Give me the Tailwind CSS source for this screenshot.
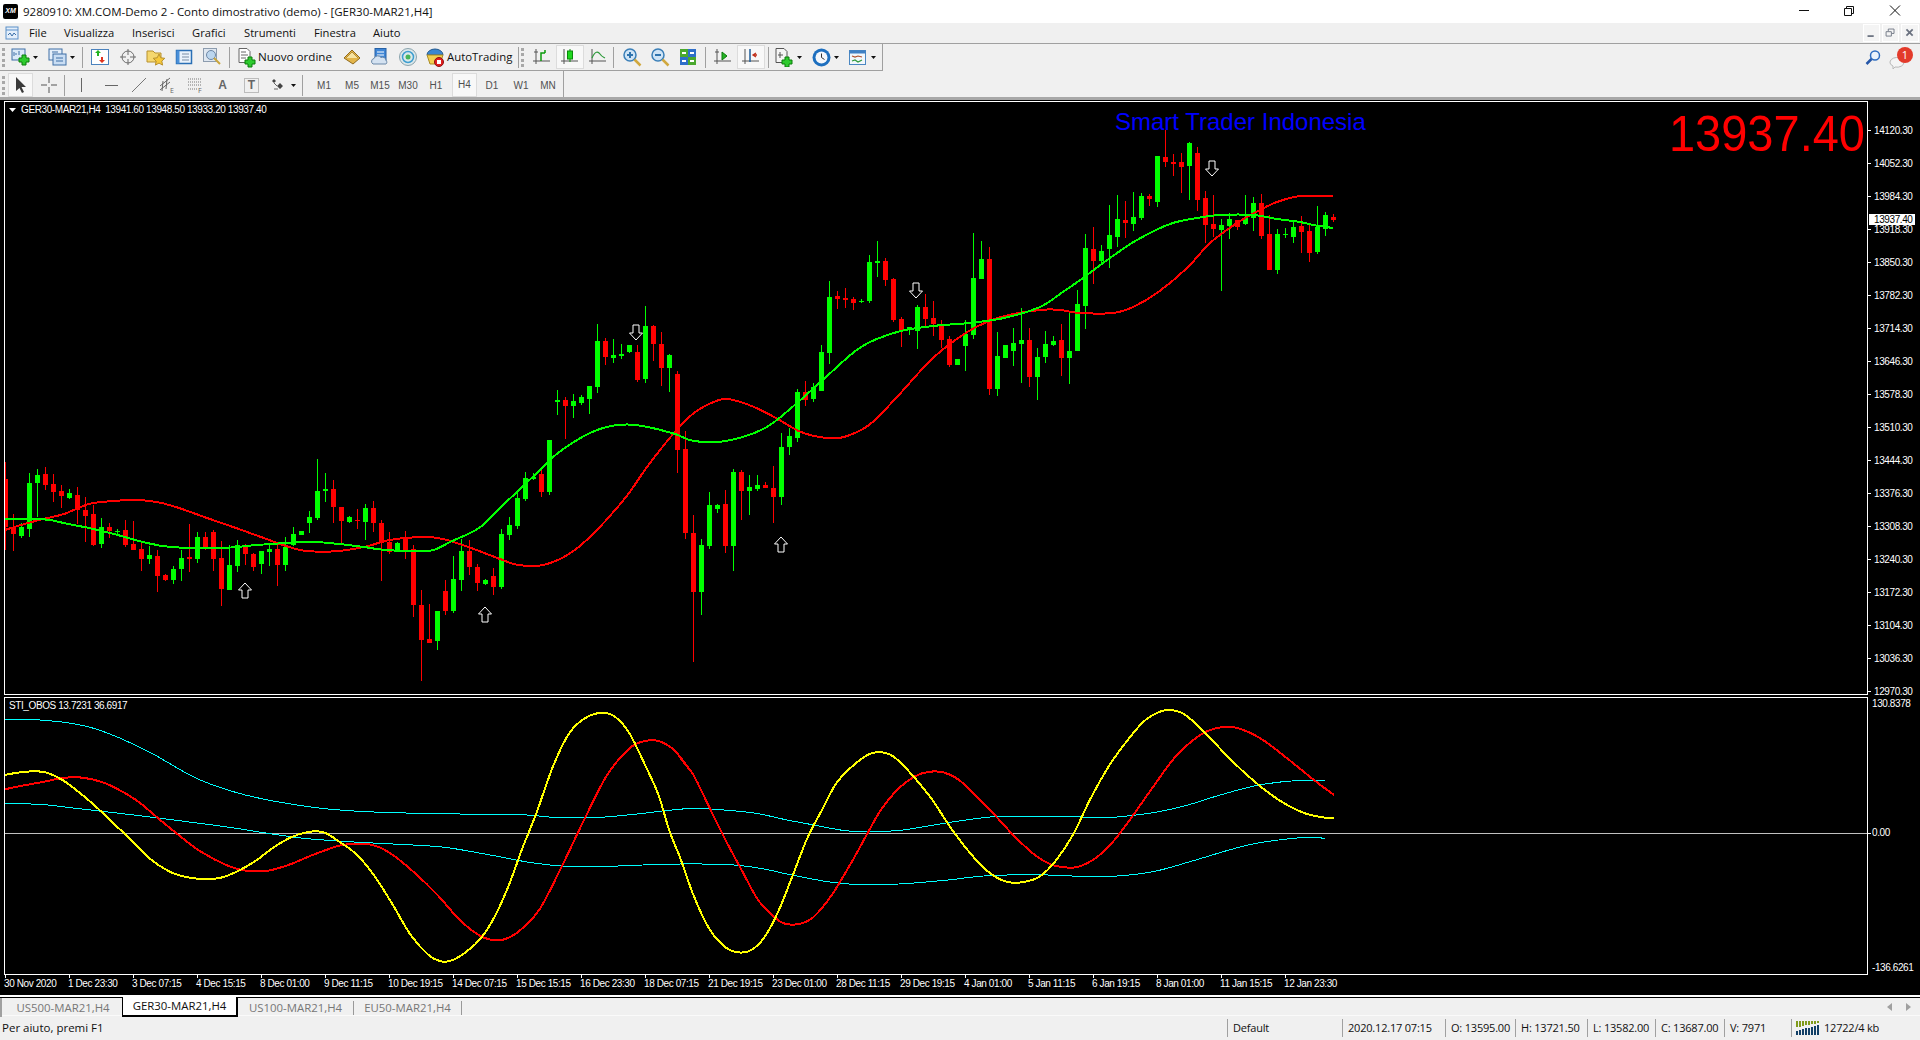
<!DOCTYPE html>
<html lang="en" class="overflow-hidden">
<head>
  <meta charset="UTF-8" />
  <title>9280910: XM.COM-Demo 2</title>
  <script src="https://cdn.jsdelivr.net/npm/@tailwindcss/browser@4"></script>
</head>
<body class="w-[1920px] h-[1040px] overflow-hidden bg-[#f0f0f0]">
<div class="w-[1920px] h-[1040px] overflow-hidden flex flex-col text-[12px] text-[#111] font-['Open_Sans',sans-serif]">

  <!-- title bar -->
  <div class="h-[23px] bg-white flex items-center relative">
    <span class="ml-[3px] w-[15px] h-[15px] bg-black rounded-[2px] flex items-center justify-center text-[7px] italic font-bold text-white font-['Liberation_Sans',sans-serif]">XM</span>
    <span class="ml-[5px] text-[11.5px] leading-none">9280910: XM.COM-Demo 2 - Conto dimostrativo (demo) - [GER30-MAR21,H4]</span>
    <div class="ml-auto flex items-center">
      <svg class="w-[46px] h-[23px]" viewBox="0 0 46 23"><path d="M15 10.5h10" stroke="#111" fill="none"/></svg>
      <svg class="w-[46px] h-[23px]" viewBox="0 0 46 23"><path d="M14.500 8.500h7v7h-7zM16.500 8.500v-2h7v7h-2" stroke="#111" fill="none"/></svg>
      <svg class="w-[44px] h-[23px]" viewBox="0 0 44 23"><path d="M14 5.500l10 10M24 5.500l-10 10" stroke="#111" fill="none"/></svg>
    </div>
  </div>

  <!-- menu bar -->
  <div class="h-[21px] border-b border-[#a0a0a0] flex items-center relative text-[11.2px]">
    <svg class="absolute left-[5px] top-[3px] w-[14px] h-[14px]" viewBox="0 0 14 14"><rect x="1" y="1" width="12" height="12" fill="#e3eefa" stroke="#5b8fc8"/><path d="M1 4h12" stroke="#5b8fc8"/><path d="M3 9l2-2 2 3 2-3 2 2" stroke="#3a6ea8" fill="none"/></svg>
    <span class="absolute left-[29px]">File</span>
    <span class="absolute left-[64px]">Visualizza</span>
    <span class="absolute left-[132px]">Inserisci</span>
    <span class="absolute left-[192px]">Grafici</span>
    <span class="absolute left-[244px]">Strumenti</span>
    <span class="absolute left-[314px]">Finestra</span>
    <span class="absolute left-[373px]">Aiuto</span>
    <div class="ml-auto flex gap-[2px] pr-[1px]">
      <svg class="w-[17px] h-[18px] bg-[#f4f4f4] border border-white" viewBox="0 0 17 18"><path d="M4 12.500h7" stroke="#6b7280" stroke-width="2"/></svg>
      <svg class="w-[17px] h-[18px] bg-[#f4f4f4] border border-white" viewBox="0 0 17 18"><path d="M3.500 7.500h6v5h-6zM6 7V4.500h6.500v5H10" stroke="#6b7280" fill="none"/></svg>
      <svg class="w-[18px] h-[18px] bg-[#f4f4f4] border border-white" viewBox="0 0 18 18"><path d="M5 5l7 7M12 5l-7 7" stroke="#6b7280" stroke-width="2"/></svg>
    </div>
  </div>

  <!-- standard toolbar -->
  <div class="h-[27px] relative">
    <div class="h-[27px] w-[883px] border-b border-r border-[#a0a0a0] flex items-center">
      <span class="ml-[2px] mr-[5px] w-[3px] h-[19px] border-l-[3px] border-dotted border-[#a8a8a8]"></span>
      <span class="w-[21px] flex justify-center">
        <svg class="w-[20px] h-[20px]" viewBox="0 0 20 20"><rect x="1" y="2" width="13" height="11" fill="#dbe9f8" stroke="#3f6fa5"/><path d="M3 5v4M5 6v2M8 4v4" stroke="#3f6fa5"/><path d="M11 8h4v3h3v4h-3v3h-4v-3H8v-4h3z" fill="#2ecb2e" stroke="#0b7d0b"/></svg>
      </span>
      <span class="w-[9px] flex justify-center"><svg class="w-[5px] h-[3px]" viewBox="0 0 5 3"><path d="M0 0h5L2.500 3z" fill="#111"/></svg></span>
      <span class="ml-[7px] w-[21px] flex justify-center">
        <svg class="w-[20px] h-[20px]" viewBox="0 0 20 20"><rect x="1" y="2" width="13" height="11" fill="#e4eefa" stroke="#3f6fa5"/><rect x="5" y="7" width="13" height="11" fill="#c9ddf3" stroke="#3f6fa5"/><path d="M4 5h6M8 11h7M8 14h7" stroke="#3f6fa5"/></svg>
      </span>
      <span class="w-[9px] flex justify-center"><svg class="w-[5px] h-[3px]" viewBox="0 0 5 3"><path d="M0 0h5L2.500 3z" fill="#111"/></svg></span>
      <span class="ml-[5px] mr-[3px] w-px h-[21px] bg-[#a0a0a0]"></span>
      <span class="w-[28px] flex justify-center">
        <svg class="w-[20px] h-[20px]" viewBox="0 0 20 20"><rect x="1.500" y="2.500" width="17" height="15" fill="#fff" stroke="#4b82bd"/><path d="M7 9V6H5l3-3 3 3H9v3z" fill="#22b322"/><path d="M11 10v3h-2l3 3 3-3h-2v-3z" fill="#e0341f"/></svg>
      </span>
      <span class="w-[28px] flex justify-center">
        <svg class="w-[20px] h-[20px]" viewBox="0 0 20 20"><circle cx="10" cy="10" r="6" fill="none" stroke="#6b6b6b"/><path d="M10 2v6M10 12v6M2 10h6M12 10h6" stroke="#6b6b6b"/></svg>
      </span>
      <span class="w-[28px] flex justify-center">
        <svg class="w-[20px] h-[20px]" viewBox="0 0 20 20"><path d="M1 4h6l2 2h6v9H1z" fill="#f5d76e" stroke="#b8912e"/><path d="M13 7l1.800 3.800 4 .5-3 2.800.8 4-3.600-2-3.600 2 .8-4-3-2.800 4-.5z" fill="#f6c83a" stroke="#b8912e"/></svg>
      </span>
      <span class="w-[28px] flex justify-center">
        <svg class="w-[18px] h-[18px]" viewBox="0 0 18 18"><rect x="1.500" y="2.500" width="15" height="13" fill="#eaf3fc" stroke="#2a6fb5" stroke-width="1.500"/><path d="M1.500 2.500h3v13h-3z" fill="#4a90d9"/><path d="M7 6h7M7 9h7M7 12h7" stroke="#7a8ea5"/></svg>
      </span>
      <span class="w-[28px] flex justify-center">
        <svg class="w-[20px] h-[20px]" viewBox="0 0 20 20"><rect x="1.500" y="1.500" width="13" height="13" fill="#dfe7f0" stroke="#8d9cae"/><circle cx="9" cy="8" r="4.500" fill="#bcd6ee" stroke="#6d87a5"/><path d="M12 11l6 6" stroke="#c9a53c" stroke-width="2"/></svg>
      </span>
      <span class="ml-[3px] mr-[2px] w-px h-[21px] bg-[#a0a0a0]"></span>
      <span class="ml-[5px] w-[20px] flex justify-center">
        <svg class="w-[20px] h-[21px]" viewBox="0 0 20 21"><path d="M2 1.500h8l3 3v11H2z" fill="#fff" stroke="#666"/><path d="M4 5h5M4 8h7M4 11h5" stroke="#666"/><path d="M11 10h4v3h3v4h-3v3h-4v-3H8v-4h3z" fill="#2ecb2e" stroke="#0b7d0b"/></svg>
      </span>
      <span class="ml-[1px] w-[77px] whitespace-nowrap text-[11.6px]">Nuovo ordine</span>
      <span class="ml-[3px] w-[28px] flex justify-center">
        <svg class="w-[20px] h-[20px]" viewBox="0 0 20 20"><path d="M2 11l8-8 8 8-7 6z" fill="#e3b54a" stroke="#8f6a1e"/><path d="M4 11l6-6 6 6" fill="#f6e3a1" stroke="#b68d35"/></svg>
      </span>
      <span class="w-[28px] flex justify-center">
        <svg class="w-[20px] h-[20px]" viewBox="0 0 20 20"><rect x="5" y="1.500" width="11" height="12" fill="#3f86d6" stroke="#2761a5"/><path d="M7 5h7M7 8h7" stroke="#fff"/><path d="M3 17a3 3 0 0 1 1-5.500 4 4 0 0 1 7-1 3.500 3.500 0 0 1 5 3 2.200 2.200 0 0 1 0 3.500z" fill="#d4e2f1" stroke="#6a88a8"/></svg>
      </span>
      <span class="w-[27px] flex justify-center">
        <svg class="w-[20px] h-[20px]" viewBox="0 0 20 20"><circle cx="10" cy="10" r="8.500" fill="#dce8ea" stroke="#8aa3ad"/><circle cx="10" cy="10" r="5.500" fill="none" stroke="#3e9ed0" stroke-width="1.500"/><circle cx="10" cy="10" r="2.500" fill="#46b558"/></svg>
      </span>
      <span class="ml-[2px] w-[24px] flex justify-center">
        <svg class="w-[20px] h-[21px]" viewBox="0 0 20 21"><path d="M2 8a8 6 0 0 1 16 0z" fill="#3b87cf" stroke="#23598f"/><path d="M2 8h16l-3 9H5z" fill="#f3d04f" stroke="#a88c27"/><circle cx="14" cy="15" r="4.500" fill="#e01f1f" stroke="#8e1010"/><rect x="12" y="13" width="4" height="4" fill="#fff"/></svg>
      </span>
      <span class="w-[66px] whitespace-nowrap text-[11.4px]">AutoTrading</span>
      <span class="ml-[5px] w-px h-[21px] bg-[#a0a0a0]"></span>
      <span class="ml-[2px] w-[3px] h-[19px] border-l-[3px] border-dotted border-[#a8a8a8]"></span>
      <span class="ml-[4px] w-[28px] h-[24px] flex justify-center items-center">
        <svg class="w-[18px] h-[18px]" viewBox="0 0 18 18"><path d="M3 1v15M0 13h17M1 4h4" stroke="#555" fill="none"/><path d="M8 13V5h4M12 5V2" stroke="#0a9a0a" stroke-width="1.500" fill="none"/></svg>
      </span>
      <span class="w-[28px] h-[24px] flex justify-center items-center bg-[#f8f8f8] border border-[#dcdcdc]">
        <svg class="w-[18px] h-[18px]" viewBox="0 0 18 18"><path d="M3 1v15M0 13h17" stroke="#555" fill="none"/><path d="M9 1v13" stroke="#0a8a0a"/><rect x="6.500" y="3" width="5" height="8" fill="#1fd81f" stroke="#0a8a0a"/></svg>
      </span>
      <span class="w-[28px] h-[24px] flex justify-center items-center">
        <svg class="w-[18px] h-[18px]" viewBox="0 0 18 18"><path d="M3 1v15M0 13h17" stroke="#555" fill="none"/><path d="M3 10c3-7 6-7 8-4s3 3 5 4" stroke="#2d9a3a" fill="none" stroke-width="1.200"/></svg>
      </span>
      <span class="ml-[1px] mr-[4px] w-px h-[21px] bg-[#a0a0a0]"></span>
      <span class="w-[28px] flex justify-center">
        <svg class="w-[20px] h-[20px]" viewBox="0 0 20 20"><circle cx="8" cy="8" r="6" fill="#cfe4f6" stroke="#3a7fb8" stroke-width="1.500"/><path d="M5 8h6M8 5v6" stroke="#2f74ae" stroke-width="2"/><path d="M12.500 12.500l6 6" stroke="#d0a83f" stroke-width="2.500"/></svg>
      </span>
      <span class="w-[28px] flex justify-center">
        <svg class="w-[20px] h-[20px]" viewBox="0 0 20 20"><circle cx="8" cy="8" r="6" fill="#cfe4f6" stroke="#3a7fb8" stroke-width="1.500"/><path d="M5 8h6" stroke="#2f74ae" stroke-width="2"/><path d="M12.500 12.500l6 6" stroke="#d0a83f" stroke-width="2.500"/></svg>
      </span>
      <span class="w-[28px] flex justify-center">
        <svg class="w-[18px] h-[18px]" viewBox="0 0 18 18"><rect x="1" y="1" width="8" height="8" fill="#4aa82e"/><rect x="9" y="1" width="8" height="8" fill="#2f6fc9"/><rect x="1" y="9" width="8" height="8" fill="#2f6fc9"/><rect x="9" y="9" width="8" height="8" fill="#4aa82e"/><path d="M3 5h4M11 5h4M3 13h4M11 13h4" stroke="#fff" stroke-width="2"/></svg>
      </span>
      <span class="ml-[3px] mr-[3px] w-px h-[21px] bg-[#a0a0a0]"></span>
      <span class="w-[28px] h-[24px] flex justify-center items-center">
        <svg class="w-[18px] h-[18px]" viewBox="0 0 18 18"><path d="M3 1v15M0 13h17M1 4h4" stroke="#555" fill="none"/><path d="M8 4l5 4-5 4z" fill="#24b324" stroke="#0a7a0a"/></svg>
      </span>
      <span class="w-[28px] h-[24px] flex justify-center items-center bg-[#f8f8f8] border border-[#dcdcdc]">
        <svg class="w-[18px] h-[18px]" viewBox="0 0 18 18"><path d="M3 1v15M0 13h17" stroke="#555" fill="none"/><path d="M8 1v13" stroke="#1d5c9a" stroke-width="1.500"/><path d="M15 7h-3M14 5l-3 2 3 2" stroke="#c0301c" fill="none" stroke-width="1.300"/></svg>
      </span>
      <span class="ml-[3px] mr-[5px] w-px h-[21px] bg-[#a0a0a0]"></span>
      <span class="w-[20px] flex justify-center">
        <svg class="w-[20px] h-[20px]" viewBox="0 0 20 20"><path d="M2 1.500h8l3 3v11H2z" fill="#f5f5f5" stroke="#555"/><path d="M6 5v6M4 8h5" stroke="#555"/><path d="M11 10h4v3h3v4h-3v3h-4v-3H8v-4h3z" fill="#2ecb2e" stroke="#0b7d0b"/></svg>
      </span>
      <span class="w-[10px] flex justify-center"><svg class="w-[5px] h-[3px]" viewBox="0 0 5 3"><path d="M0 0h5L2.500 3z" fill="#111"/></svg></span>
      <span class="ml-[7px] w-[20px] flex justify-center">
        <svg class="w-[19px] h-[19px]" viewBox="0 0 19 19"><circle cx="9.500" cy="9.500" r="9" fill="#1d6fbf"/><circle cx="9.500" cy="9.500" r="6" fill="#f4f7fb"/><path d="M9.500 5.500v4l3 2" stroke="#333" fill="none"/></svg>
      </span>
      <span class="w-[10px] flex justify-center"><svg class="w-[5px] h-[3px]" viewBox="0 0 5 3"><path d="M0 0h5L2.500 3z" fill="#111"/></svg></span>
      <span class="ml-[7px] w-[20px] flex justify-center">
        <svg class="w-[18px] h-[18px]" viewBox="0 0 18 18"><rect x=".5" y="2.500" width="16" height="14" fill="#f2f7fc" stroke="#4a87c2"/><rect x=".5" y="2.500" width="16" height="3" fill="#3f80c4"/><path d="M3 8l3 1 3-1 4 1" stroke-width="1.200" fill="none" stroke="#b0502a"/><path d="M3 13l3-1 3 2 4-2" stroke-width="1.200" fill="none" stroke="#2f9a3a"/></svg>
      </span>
      <span class="w-[10px] flex justify-center"><svg class="w-[5px] h-[3px]" viewBox="0 0 5 3"><path d="M0 0h5L2.500 3z" fill="#111"/></svg></span>
    </div>
    <!-- search + notification at the far right -->
    <svg class="absolute left-[1864px] top-[5px] w-[18px] h-[18px]" viewBox="0 0 18 18"><circle cx="11" cy="6.500" r="4.500" fill="#eaf2fb" stroke="#2d6cc0" stroke-width="1.500"/><path d="M7.500 10l-5 5" stroke="#2456a8" stroke-width="2.500"/></svg>
    <svg class="absolute left-[1889px] top-[2px] w-[26px] h-[24px]" viewBox="0 0 26 24"><path d="M1 17a7 5 0 0 1 14-1 7 5 0 0 1-9 5l-2 2v-3a5 5 0 0 1-3-3z" fill="#f4f4f4" stroke="#b8b8b8"/><circle cx="16" cy="9" r="8" fill="#e33a2a"/></svg>
    <span class="absolute left-[1901px] top-[3px] w-[8px] text-center text-[11px] leading-[16px] text-white">1</span>
  </div>

  <!-- line studies + timeframes -->
  <div class="h-[26px]">
    <div class="h-[26px] w-[564px] pt-[2px] border-r border-[#a0a0a0] flex items-center">
      <span class="ml-[2px] mr-[3px] w-[3px] h-[19px] border-l-[3px] border-dotted border-[#a8a8a8]"></span>
      <span class="w-[25px] h-[24px] flex justify-center items-center bg-[#f8f8f8] border border-[#dcdcdc]">
        <svg class="w-[12px] h-[16px]" viewBox="0 0 12 16"><path d="M1 0v14l3.500-3 2.500 5 2-1-2.500-5H11z" fill="#3a3a3a"/></svg>
      </span>
      <span class="w-[31px] flex justify-center">
        <svg class="w-[16px] h-[16px]" viewBox="0 0 16 16"><path d="M8 0v6M8 10v6M0 8h6M10 8h6" stroke="#555"/></svg>
      </span>
      <span class="w-px h-[21px] bg-[#a0a0a0]"></span>
      <span class="w-[33px] flex justify-center"><svg class="w-[3px] h-[14px]" viewBox="0 0 3 14"><path d="M1.500 0v14" stroke="#666"/></svg></span>
      <span class="w-[26px] flex justify-center"><svg class="w-[13px] h-[3px]" viewBox="0 0 13 3"><path d="M0 1.500h13" stroke="#666"/></svg></span>
      <span class="w-[29px] flex justify-center"><svg class="w-[14px] h-[14px]" viewBox="0 0 14 14"><path d="M0 14L14 0" stroke="#777"/></svg></span>
      <span class="w-[27px] flex justify-center">
        <svg class="w-[18px] h-[18px]" viewBox="0 0 18 18"><path d="M2 10l10-8M2 14l10-8M4 15l1-10M8 13l1-10" stroke="#666" fill="none"/><text x="12" y="17" font-size="7" fill="#666">E</text></svg>
      </span>
      <span class="w-[29px] flex justify-center">
        <svg class="w-[18px] h-[18px]" viewBox="0 0 18 18"><path d="M2 3h13M2 6h13M2 9h13M2 13h10" stroke="#777" stroke-dasharray="1 1"/><text x="12" y="17" font-size="7" fill="#666">F</text></svg>
      </span>
      <span class="w-[27px] text-center text-[12px] font-bold text-[#666] font-['Liberation_Sans',sans-serif]">A</span>
      <span class="w-[31px] flex justify-center relative">
        <svg class="w-[15px] h-[15px]" viewBox="0 0 15 15"><rect x=".5" y=".5" width="14" height="14" fill="none" stroke="#888" stroke-dasharray="1 1"/></svg>
        <span class="absolute inset-0 text-center text-[12px] leading-[15px] font-bold text-[#666] font-['Liberation_Sans',sans-serif]">T</span>
      </span>
      <span class="w-[22px] flex justify-center">
        <svg class="w-[14px] h-[14px]" viewBox="0 0 14 14"><path d="M1 3l2-2 2 2-2 2zM6 8l3-3 3 3-3 3z" fill="#444"/><path d="M3 5l3 3M3 11h4" stroke="#666"/></svg>
      </span>
      <span class="w-[8px] flex justify-center"><svg class="w-[5px] h-[3px]" viewBox="0 0 5 3"><path d="M0 0h5L2.500 3z" fill="#111"/></svg></span>
      <span class="ml-[5px] w-px h-[21px] bg-[#a0a0a0]"></span>
      <div class="ml-[7px] flex items-center text-[10px] text-[#505050] font-['Liberation_Sans',sans-serif]">
        <span class="w-[28px] text-center">M1</span>
        <span class="w-[28px] text-center">M5</span>
        <span class="w-[28px] text-center">M15</span>
        <span class="w-[28px] text-center">M30</span>
        <span class="w-[28px] text-center">H1</span>
        <span class="ml-[2px] w-[25px] h-[24px] leading-[22px] text-center bg-[#f8f8f8] border border-[#dcdcdc]">H4</span>
        <span class="w-[30px] text-center">D1</span>
        <span class="w-[28px] text-center">W1</span>
        <span class="w-[26px] text-center">MN</span>
      </div>
    </div>
  </div>

  <!-- chart window -->
  <div class="h-[898px] bg-black border-t-[3px] border-[#a8a8a8] pt-px flex flex-col font-['Liberation_Sans',sans-serif] text-white text-[10px] tracking-[-0.4px]">
    <!-- price pane -->
    <div class="h-[593px] flex">
      <div class="ml-[4px] w-[1864px] border border-b-0 border-white h-full relative overflow-hidden">
        <svg id="price-plot" class="w-full h-[592px] block" viewBox="5 102 1862 592"></svg>
        <div class="absolute left-[4px] top-[2px] leading-[12px] flex items-center whitespace-pre">
          <svg class="w-[7px] h-[4px] mr-[5px]" viewBox="0 0 7 4"><path d="M0 0h7L3.500 4z" fill="#fff"/></svg>GER30-MAR21,H4&nbsp;&nbsp;13941.60 13948.50 13933.20 13937.40</div>
        <div class="absolute left-[1110px] top-[6px] text-[24px] leading-[28px] tracking-normal text-[#0000ff]">Smart Trader Indonesia</div>
        <div class="absolute right-[2px] top-[6px] text-[47px] leading-[52px] tracking-normal text-[#ff0000] scale-y-[1.08]">13937.40</div>
      </div>
      <div id="price-axis" class="flex-1 relative"></div>
    </div>
    <div class="h-[3px] border-t border-white ml-[4px] w-[1864px]"></div>
    <!-- indicator pane -->
    <div class="h-[278px] flex">
      <div class="ml-[4px] w-[1864px] border border-white h-full relative overflow-hidden">
        <svg id="osc-plot" class="w-full h-full block" viewBox="5 698 1862 276"></svg>
        <div class="absolute left-[4px] top-[2px] leading-[12px]">STI_OBOS 13.7231 36.6917</div>
      </div>
      <div id="osc-axis" class="flex-1 relative"></div>
    </div>
    <!-- time axis -->
    <div id="time-axis" class="h-[20px] relative"></div>
  </div>

  <!-- chart tabs -->
  <div class="h-[20px] border-t-2 border-white relative">
    <div class="h-[20px] border-t border-black flex items-center text-[11.4px] relative">
      <span class="w-[2px] h-[19px] bg-[#a0a0a0]"></span>
      <span class="w-[122px] -mr-[2px] text-center text-[#777]">US500-MAR21,H4</span>
      <span class="w-[116px] h-[20px] -mt-px bg-white border-x border-b-2 border-black border-r-2 text-center leading-[18px]">GER30-MAR21,H4</span>
      <span class="w-[116px] text-center text-[#777] border-r border-[#999] leading-[14px]">US100-MAR21,H4</span>
      <span class="w-[108px] text-center text-[#777] border-r border-[#999] leading-[14px]">EU50-MAR21,H4</span>
      <svg class="absolute left-[1887px] top-[5px] w-[5px] h-[8px]" viewBox="0 0 5 8"><path d="M5 0v8L0 4z" fill="#a0a0a0"/></svg>
      <svg class="absolute left-[1906px] top-[5px] w-[5px] h-[8px]" viewBox="0 0 5 8"><path d="M0 0v8l5-4z" fill="#a0a0a0"/></svg>
    </div>
  </div>

  <!-- status bar -->
  <div class="flex-1 border-t border-[#fafafa] flex items-center text-[11px] tracking-[-0.2px] whitespace-nowrap">
    <span class="w-[1227px] pl-[2px] text-[11.5px] tracking-normal">Per aiuto, premi F1</span>
    <span class="w-[115px] pl-[5px] h-[18px] leading-[18px] border-l border-[#a0a0a0]">Default</span>
    <span class="w-[103px] pl-[5px] h-[18px] leading-[18px] border-l border-[#a0a0a0]">2020.12.17 07:15</span>
    <span class="w-[70px] pl-[5px] h-[18px] leading-[18px] border-l border-[#a0a0a0]">O: 13595.00</span>
    <span class="w-[72px] pl-[5px] h-[18px] leading-[18px] border-l border-[#a0a0a0]">H: 13721.50</span>
    <span class="w-[68px] pl-[5px] h-[18px] leading-[18px] border-l border-[#a0a0a0]">L: 13582.00</span>
    <span class="w-[69px] pl-[5px] h-[18px] leading-[18px] border-l border-[#a0a0a0]">C: 13687.00</span>
    <span class="w-[67px] pl-[5px] h-[18px] leading-[18px] border-l border-[#a0a0a0]">V: 7971</span>
    <span class="flex-1 pl-[4px] h-[18px] leading-[18px] border-l border-[#a0a0a0] flex items-center gap-[4px]">
      <svg class="w-[24px] h-[14px]" viewBox="0 0 24 14"><path d="M1 0v6M4 0v6M7 0v5M10 0v4M13 0v4M16 0v3M19 0v3M22 0v2" stroke="#7f9a1a" stroke-width="2"/><path d="M1 10v4M4 9v5M7 8v6M10 7v7M13 7v7M16 6v8M19 5v9M22 4v10" stroke="#123f66" stroke-width="2"/></svg>
      <span>12722/4 kb</span>
    </span>
  </div>
</div>

  <script>
    // bars read off the chart: [green?, wickTop, bodyTop, bodyBottom, wickBottom]
    const sectionA = [ // y = 440 + v / 3
      [0,65,118,262,330],[0,222,265,282,332],[1,250,260,288,295],[1,98,128,266,290],[1,87,105,130,232],[0,82,102,135,152],[0,102,132,155,185],[0,135,153,167,205],[1,148,158,172,178],[0,140,165,210,250],
      [0,172,210,228,308],[0,195,222,315,318],[1,235,262,312,326],[0,250,262,275,295],[1,266,272,274,282],[0,240,270,315,322],[0,244,312,329,330],[0,310,327,356,395],[1,318,345,356,372],[0,330,348,407,455],
      [0,402,405,419,422],[1,378,388,420,431],[1,330,354,387,422],[0,252,351,356,395],[1,276,291,357,370],[0,275,291,322,328],[0,270,276,357,392],[0,303,354,447,497],[1,316,375,450,452],[1,300,316,378,395],
      [0,312,322,342,375],[0,340,342,381,393],[1,332,333,372,402],[1,310,328,336,380],[0,310,328,375,440],[1,292,320,375,395],[1,262,282,315,318],[1,273,273,285,285],[1,212,232,250,278],[1,57,153,234,240],
      [1,98,148,153,186],[0,120,148,203,250],[0,200,201,243,310],[1,228,232,246,250],[0,207,240,243,267],[1,192,204,246,300],[0,183,204,249,276],[0,240,249,310,422],[0,276,306,337,342],[1,305,310,332,335],
      [0,273,292,332,357],[0,315,328,495,530],[0,450,495,600,722],[0,492,597,608,608],[1,514,514,605,632],[0,420,453,514,525],[1,348,417,513,518],[1,296,333,420,453],[0,300,333,381,405],[0,372,381,429,453],
      [1,418,420,432,435],[0,385,408,441,465],[1,268,282,441,447],[1,232,255,285,302],[1,157,174,258,268],[1,97,114,177,185],[1,99,110,117,120],[0,90,102,156,172],[1,0,0,155,165]
    ].map(b => [b[0], 440 + b[1] / 3, 440 + b[2] / 3, 440 + b[3] / 3, 440 + b[4] / 3]);
    const sectionB = [ // y = 300 + v / 3
      [1,270,300,306,345],[0,292,300,318,418],[1,282,304,318,353],[1,285,291,310,314],[1,258,259,299,342],[1,72,123,261,278],[0,115,124,172,197],[1,117,165,174,188],[1,132,162,167,177],[1,136,136,158,160],
      [0,135,156,240,246],[1,18,78,237,250],[0,75,78,132,183],[0,97,132,203,260],[1,162,165,203,275],[0,213,222,450,518],[0,393,447,700,718],[0,645,699,876,1085],[1,717,735,876,944],[1,576,615,738,747],
      [1,612,615,627,638],[0,570,612,738,758],[1,507,516,738,812],[0,510,516,573,660],[1,525,561,573,645],[1,525,555,567,574],[0,546,555,564,565],[0,498,564,591,669],[1,400,441,591,615],[1,385,408,441,465],
      [1,268,276,414,426],[0,243,276,300,318],[1,250,262,297,308],[1,136,156,272,275]
    ].map(b => [b[0], 300 + b[1] / 3, 300 + b[2] / 3, 300 + b[3] / 3, 300 + b[4] / 3]);
    const sectionC = [ // y = 210 + v / 3
      [1,213,261,429,462],[0,243,258,267,297],[0,234,264,270,294],[0,262,267,279,300],[1,267,272,274,279],[1,135,156,273,280],[1,93,153,159,200],[0,144,153,210,228],[0,204,207,330,336],[0,321,327,360,411],
      [1,351,351,359,375],[1,285,291,363,417],[0,252,291,327,351],[0,273,324,342,378],[0,330,342,390,414],[0,378,387,465,471],[1,447,447,465,465],[1,330,372,408,483],[1,69,204,375,387],[1,93,147,207,207],
      [0,111,147,537,555],[1,366,438,537,558],[1,405,405,444,444],[1,354,399,423,468],[1,294,390,402,519],[0,354,390,501,531],[1,414,441,501,570],[1,363,402,441,459],[1,378,393,405,408]
    ].map(b => [b[0], 210 + b[1] / 3, 210 + b[2] / 3, 210 + b[3] / 3, 210 + b[4] / 3]);
    const sectionD = [ // y = 110 + v / 3
      [0,642,690,744,798],[1,606,723,744,822],[1,540,582,723,723],[1,372,414,588,657],[0,351,417,453,522],[1,405,423,453,465],[1,285,375,417,474],[1,255,327,381,411],[0,273,330,339,384],[1,246,321,342,363],
      [1,249,258,324,330],[0,252,258,267,288],[1,138,138,276,291],[0,60,141,156,171],[0,132,156,162,198],[0,129,156,171,249],[1,96,99,168,270],[0,111,129,270,303],[0,243,264,345,399],[0,255,342,357,381],
      [1,327,345,360,543],[1,309,327,348,387],[0,330,330,351,360],[1,255,324,342,345],[1,261,279,324,363],[0,252,279,378,387],[0,315,372,480,480],[1,357,372,480,492],[1,354,373,375,384],[1,336,351,381,399],
      [0,318,348,366,429],[0,345,363,429,456],[1,288,351,426,432],[1,306,315,357,378],[0,312,321,330,336]
    ].map(b => [b[0], 110 + b[1] / 3, 110 + b[2] / 3, 110 + b[3] / 3, 110 + b[4] / 3]);
    const bars = [...sectionA, ...sectionB, ...sectionC, ...sectionD];

    const greenMa = [[5,519],[36,519],[50,520],[68,524],[89,528],[114,534],[143,542],[171,547],[221,548],[257,545],[286,543],[314,542],[339,544],[364,547],[386,550],[429,551],[450,542],[479,528],[500,508],[521,488],[540,470],[558,453],[586,435],[611,426],[636,425],[672,433],[694,441],[726,441],[765,428],[797,403],[826,377],[861,347],[897,332],[933,326],[969,323],[1004,318],[1040,307],[1060,294],[1083,278],[1110,258],[1137,240],[1170,224],[1197,218],[1220,215],[1253,215],[1277,219],[1300,222],[1313,225],[1333,228]];
    const redMa = [[5,530],[21,525],[43,519],[64,514],[89,504],[114,501],[136,500],[157,502],[179,508],[207,518],[236,528],[261,537],[286,546],[307,551],[339,551],[368,546],[389,540],[421,537],[443,539],[471,548],[500,559],[518,565],[543,565],[569,554],[594,533],[626,497],[647,467],[674,433],[694,413],[719,400],[733,400],[754,407],[776,418],[801,432],[826,438],[844,437],[869,425],[897,397],[933,358],[969,331],[1001,317],[1040,310],[1060,310],[1080,313],[1113,313],[1133,307],[1157,293],[1187,268],[1210,243],[1237,223],[1260,210],[1277,202],[1300,196],[1333,196]];

    // x = ox + v / 2.24, y = 695 + v / 3
    const trace = (left, right) => [...left.map(p => [p[0] / 2.24, 695 + p[1] / 3]), ...right.map(p => [680 + p[0] / 2.24, 695 + p[1] / 3])];
    const oscYellow = trace(
      [[10,240],[40,233],[75,229],[105,233],[140,255],[180,295],[215,335],[250,380],[290,430],[335,490],[380,530],[420,547],[460,552],[495,548],[530,530],[570,500],[610,460],[650,428],[690,411],[725,412],[760,440],[800,480],[840,545],[880,630],[920,720],[960,780],[985,798],[1010,797],[1045,770],[1080,725],[1110,660],[1140,570],[1170,460],[1200,360],[1240,210],[1275,115],[1310,70],[1350,53],[1380,68],[1410,115],[1445,210],[1475,300],[1500,410]],
      [[0,487],[30,600],[65,700],[100,755],[130,772],[160,765],[190,725],[220,650],[250,550],[285,430],[320,340],[350,265],[385,215],[420,180],[445,171],[475,182],[510,225],[560,305],[610,405],[660,490],[700,540],[735,561],[770,561],[805,545],[840,500],[880,420],[920,310],[960,215],[1000,140],[1040,78],[1075,50],[1100,45],[1130,58],[1170,105],[1220,175],[1270,240],[1320,295],[1360,330],[1400,355],[1440,367],[1465,369]]);
    const oscRed = trace(
      [[10,283],[50,272],[100,260],[140,249],[185,248],[230,262],[270,287],[310,320],[350,365],[400,420],[450,470],[510,512],[550,527],[600,527],[650,508],[700,480],[760,452],[800,446],[840,452],[880,480],[930,535],[980,600],[1030,675],[1075,722],[1110,736],[1140,728],[1170,700],[1210,640],[1260,510],[1310,370],[1360,240],[1410,160],[1445,138],[1475,138],[1510,165],[1545,225]],
      [[0,187],[30,240],[65,335],[100,430],[140,530],[175,615],[210,665],[235,686],[270,686],[300,665],[340,600],[385,500],[420,415],[450,345],[490,280],[525,245],[555,231],[590,232],[625,255],[665,305],[705,360],[750,425],[795,480],[830,508],[855,516],[890,516],[930,490],[970,440],[1010,370],[1060,275],[1110,185],[1160,125],[1200,100],[1245,98],[1300,130],[1360,190],[1420,255],[1465,300]]);
    const oscUpper = trace(
      [[10,73],[50,73],[100,76],[160,85],[210,100],[270,130],[340,175],[440,250],[530,293],[620,320],[720,340],[820,350],[940,355],[1080,358],[1180,360],[1240,367],[1330,368],[1420,358],[1490,347]],
      [[0,343],[25,340],[90,344],[170,355],[240,375],[300,390],[370,407],[430,410],[500,405],[600,383],[680,368],[730,364],[880,365],[920,368],[970,367],[1060,353],[1130,333],[1210,300],[1290,272],[1370,258],[1445,256]]);
    const oscLower = trace(
      [[10,327],[90,328],[170,340],[300,360],[430,382],[520,398],[600,415],[680,430],[780,440],[880,447],[990,456],[1090,478],[1190,503],[1270,514],[1360,514],[1440,510]],
      [[0,507],[110,509],[180,520],[250,540],[330,560],[390,568],[490,567],[600,555],[680,543],[790,539],[900,544],[970,544],[1060,530],[1150,497],[1230,465],[1290,445],[1360,432],[1410,427],[1445,430]]);

    function smooth(pts) {
      let d = `M${pts[0][0]} ${pts[0][1]}`;
      for (let i = 0; i < pts.length - 1; i++) {
        const a = pts[Math.max(i - 1, 0)], b = pts[i], c = pts[i + 1], e = pts[Math.min(i + 2, pts.length - 1)];
        d += `C${b[0] + (c[0] - a[0]) / 6} ${b[1] + (c[1] - a[1]) / 6} ${c[0] - (e[0] - b[0]) / 6} ${c[1] - (e[1] - b[1]) / 6} ${c[0]} ${c[1]}`;
      }
      return d;
    }
    const line = (pts, color, width) => `<path d="${smooth(pts)}" fill="none" stroke="${color}" stroke-width="${width}" shape-rendering="crispEdges"/>`;

    let svg = "";
    bars.forEach((b, i) => {
      const color = b[0] ? "#00ff00" : "#ff0000";
      svg += `<rect x="${5 + 8 * i}" y="${Math.round(b[1])}" width="1" height="${Math.max(1, Math.round(b[4] - b[1]))}" fill="${color}"/>`;
      svg += `<rect x="${3 + 8 * i}" y="${Math.round(b[2])}" width="5" height="${Math.max(1, Math.round(b[3] - b[2]))}" fill="${color}"/>`;
    });
    svg += line(redMa, "#ff0000", 2) + line(greenMa, "#00ff00", 2);
    const arrow = (x, y, dir) => `<path transform="translate(${x} ${y}) scale(1 ${dir})" d="M0 0L6.500 7H3V15H-3V7H-6.500Z" fill="#000" stroke="#fff" stroke-width="1"/>`;
    svg += arrow(245, 583, 1) + arrow(485, 607, 1) + arrow(781, 537, 1);
    svg += arrow(636, 340, -1) + arrow(916, 298, -1) + arrow(1212, 176, -1);
    document.getElementById("price-plot").innerHTML = svg;

    document.getElementById("osc-plot").innerHTML =
      `<path d="M5 833H1867" stroke="#c0c0c0" shape-rendering="crispEdges"/>` +
      line(oscUpper, "#00ffff", 1) + line(oscLower, "#00ffff", 1) +
      line(oscRed, "#ff0000", 2) + line(oscYellow, "#ffff00", 2);

    // right axis
    const prices = ["14120.30","14052.30","13984.30","13918.30","13850.30","13782.30","13714.30","13646.30","13578.30","13510.30","13444.30","13376.30","13308.30","13240.30","13172.30","13104.30","13036.30","12970.30"];
    const priceAxis = document.getElementById("price-axis");
    prices.forEach((p, i) => {
      const y = 130 + 33 * i - 101;
      priceAxis.innerHTML += `<span class="absolute left-0 w-[3px] h-px bg-white" style="top:${y}px"></span><span class="absolute left-[6px] leading-[12px]" style="top:${y - 5}px">${p}</span>`;
    });
    priceAxis.innerHTML += `<span class="absolute left-[1px] top-[113px] w-[46px] h-[11px] pl-[5px] leading-[11px] bg-white text-black">13937.40</span>`;

    const oscAxis = document.getElementById("osc-axis");
    [["130.8378", 704], ["0.00", 833], ["-136.6261", 968]].forEach(([t, y]) => {
      oscAxis.innerHTML += `<span class="absolute left-[4px] leading-[12px]" style="top:${y - 697 - 6}px">${t}</span>`;
    });
    oscAxis.innerHTML += `<span class="absolute left-0 top-[136px] w-[3px] h-px bg-white"></span>`;

    // time axis
    const times = ["30 Nov 2020","1 Dec 23:30","3 Dec 07:15","4 Dec 15:15","8 Dec 01:00","9 Dec 11:15","10 Dec 19:15","14 Dec 07:15","15 Dec 15:15","16 Dec 23:30","18 Dec 07:15","21 Dec 19:15","23 Dec 01:00","28 Dec 11:15","29 Dec 19:15","4 Jan 01:00","5 Jan 11:15","6 Jan 19:15","8 Jan 01:00","11 Jan 15:15","12 Jan 23:30"];
    const timeAxis = document.getElementById("time-axis");
    times.forEach((t, i) => {
      const x = 5 + 64 * i;
      timeAxis.innerHTML += `<span class="absolute top-0 w-px h-[3px] bg-white" style="left:${x}px"></span><span class="absolute top-[3px] leading-[12px] whitespace-nowrap" style="left:${x - 1}px">${t}</span>`;
    });
  </script>
</body>
</html>
